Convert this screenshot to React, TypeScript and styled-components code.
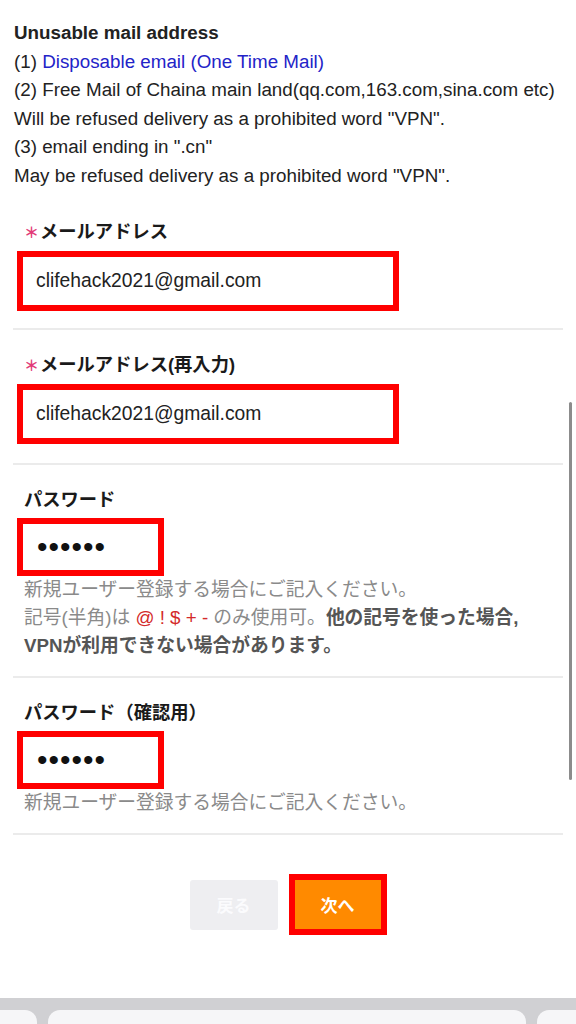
import React from 'react'
import styled, { createGlobalStyle } from 'styled-components'

const GlobalStyle = createGlobalStyle`
  html, body {
    margin: 0;
    padding: 0;
    background: #fff;
  }
  body {
    font-family: "Liberation Sans", "Noto Sans CJK JP", sans-serif;
    color: #222;
    width: 576px;
    height: 1024px;
    overflow: hidden;
  }
`

const Page = styled.div`
  position: relative;
  width: 576px;
  height: 1024px;
  display: flex;
  flex-direction: column;
`

const Notice = styled.div`
  padding: 19px 14px 0 14px;
  font-size: 18.8px;
  line-height: 28.5px;
  white-space: nowrap;
`

const NoticeTitle = styled.div`
  font-weight: bold;
`

const NoticeLine = styled.div``

const Blue = styled.span`
  color: #2323c8;
`

const Form = styled.div`
  margin: 30px 13px 0 13px;
`

const Field = styled.div<{ $bottom?: number }>`
  padding: 0 0 ${p => p.$bottom ?? 17}px 0;
  border-bottom: 2px solid #ebebeb;
  & + & {
    padding-top: 23px;
  }
`

const Label = styled.div`
  padding-left: 11px;
  font-size: 18.3px;
  font-weight: bold;
  line-height: 24px;
  color: #1a1a1a;
  margin-bottom: 6px;
`

const Required = styled.span`
  color: #e23a78;
  font-size: 15px;
  font-weight: bold;
  margin-right: 1px;
`

const InputBox = styled.div<{ $w: number; $h: number }>`
  margin-left: 4px;
  width: ${p => p.$w}px;
  height: ${p => p.$h}px;
  box-sizing: border-box;
  border: 6px solid #ff0000;
  background: #fff;
  display: flex;
  align-items: center;
  padding-left: 13px;
  font-size: 19.3px;
  color: #222;
`

const Dots = styled.span`
  font-family: "Liberation Sans", sans-serif;
  font-size: 30px;
  letter-spacing: 1px;
  color: #111;
  line-height: 1;
  margin-left: 1px;
`

const Hint = styled.div`
  padding-left: 11px;
  font-size: 18.75px;
  line-height: 28px;
  color: #8a8a8a;
  white-space: nowrap;
`

const Symbols = styled.span`
  color: #d42a2a;
`

const Strong = styled.span`
  font-weight: bold;
  color: #555;
`

const Buttons = styled.div`
  display: flex;
  justify-content: center;
  align-items: center;
  gap: 11px;
  margin-top: 39px;
`

const BackButton = styled.div`
  width: 88px;
  height: 50px;
  border-radius: 3px;
  background: #eeeef1;
  color: #fbfbfd;
  font-size: 17px;
  font-weight: bold;
  display: flex;
  align-items: center;
  justify-content: center;
`

const NextButton = styled.div`
  width: 98px;
  height: 61px;
  box-sizing: border-box;
  border: 6px solid #ff0000;
  background: #ff8a00;
  color: #fff;
  font-size: 17px;
  font-weight: bold;
  display: flex;
  align-items: center;
  justify-content: center;
`

const Toolbar = styled.div`
  margin-top: auto;
  height: 14px;
  background: #d0d0d3;
  padding-top: 12px;
  display: flex;
  gap: 11px;
  overflow: hidden;
`

const Key = styled.div<{ $w: number; $offset?: number }>`
  flex: none;
  width: ${p => p.$w}px;
  margin-left: ${p => p.$offset || 0}px;
  height: 30px;
  border-radius: 12px;
  background: #f6f6f8;
`

const Scrollbar = styled.div`
  position: absolute;
  right: 4px;
  top: 402px;
  width: 3px;
  height: 378px;
  border-radius: 2px;
  background: #8c8c8c;
`

const App = () => {
  return (
    <Page>
      <GlobalStyle />
      <Notice>
        <NoticeTitle>Unusable mail address</NoticeTitle>
        <NoticeLine>
          (1) <Blue>Disposable email (One Time Mail)</Blue>
        </NoticeLine>
        <NoticeLine>(2) Free Mail of Chaina main land(qq.com,163.com,sina.com etc)</NoticeLine>
        <NoticeLine>Will be refused delivery as a prohibited word "VPN".</NoticeLine>
        <NoticeLine>(3) email ending in ".cn"</NoticeLine>
        <NoticeLine>May be refused delivery as a prohibited word "VPN".</NoticeLine>
      </Notice>

      <Form>
        <Field>
          <Label>
            <Required>＊</Required>メールアドレス
          </Label>
          <InputBox $w={382} $h={60}>clifehack2021@gmail.com</InputBox>
        </Field>
        <Field $bottom={19}>
          <Label>
            <Required>＊</Required>メールアドレス(再入力)
          </Label>
          <InputBox $w={382} $h={60}>clifehack2021@gmail.com</InputBox>
        </Field>
        <Field $bottom={16}>
          <Label>パスワード</Label>
          <InputBox $w={147} $h={58}>
            <Dots>••••••</Dots>
          </InputBox>
          <Hint>新規ユーザー登録する場合にご記入ください。</Hint>
          <Hint>
            記号(半角)は <Symbols>@ ! $ + -</Symbols> のみ使用可。<Strong>他の記号を使った場合,</Strong>
            <br />
            <Strong>VPNが利用できない場合があります。</Strong>
          </Hint>
        </Field>
        <Field $bottom={16}>
          <Label>パスワード（確認用）</Label>
          <InputBox $w={147} $h={58}>
            <Dots>••••••</Dots>
          </InputBox>
          <Hint>新規ユーザー登録する場合にご記入ください。</Hint>
        </Field>
      </Form>

      <Buttons>
        <BackButton>戻る</BackButton>
        <NextButton>次へ</NextButton>
      </Buttons>

      <Toolbar>
        <Key $w={57} $offset={-20} />
        <Key $w={478} />
        <Key $w={60} />
      </Toolbar>

      <Scrollbar />
    </Page>
  )
}

export default App
